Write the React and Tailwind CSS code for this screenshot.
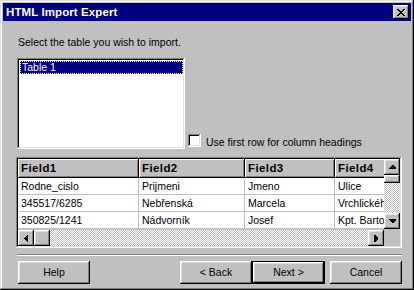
const raised =
  'shadow-[inset_-1px_-1px_#000,inset_1px_1px_#fff,inset_-2px_-2px_#808080,inset_2px_2px_#dfdfdf]';
const sunken =
  'shadow-[inset_-1px_-1px_#fff,inset_1px_1px_#808080,inset_-2px_-2px_#dfdfdf,inset_2px_2px_#000]';
const dither =
  'bg-[repeating-conic-gradient(#c0c0c0_0%_25%,#ffffff_0%_50%)] bg-[length:2px_2px]';

const columns = [
  { title: 'Field1', width: 'w-[121px]' },
  { title: 'Field2', width: 'w-[106px]' },
  { title: 'Field3', width: 'w-[90px]' },
  { title: 'Field4', width: 'w-[80px]' },
];

const rows = [
  ['Rodne_cislo', 'Prijmeni', 'Jmeno', 'Ulice'],
  ['345517/6285', 'Nebřenská', 'Marcela', 'Vrchlického'],
  ['350825/1241', 'Nádvorník', 'Josef', 'Kpt. Bartoše'],
];

const arrowPoints = {
  up: '3,0 4,0 7,3 7,4 0,4 0,3',
  down: '0,0 7,0 7,1 4,4 3,4 0,1',
  left: '4,0 4,7 3,7 0,4 0,3 3,0',
  right: '0,0 1,0 4,3 4,4 1,7 0,7',
};

const Arrow = ({ dir }) => {
  const vertical = dir === 'up' || dir === 'down';
  return (
    <svg
      width={vertical ? 7 : 4}
      height={vertical ? 4 : 7}
      shapeRendering="crispEdges"
      className="block"
    >
      <polygon points={arrowPoints[dir]} fill="#000" />
    </svg>
  );
};

const ScrollButton = ({ dir }) => (
  <div className={`w-[16px] h-[16px] shrink-0 bg-[#c0c0c0] flex items-center justify-center ${raised}`}>
    <Arrow dir={dir} />
  </div>
);

const Button = ({ children, isDefault }) =>
  isDefault ? (
    <div className="w-[73px] h-[23px] border border-black">
      <div className={`w-full h-full flex items-center justify-center bg-[#c0c0c0] ${raised}`}>
        {children}
      </div>
    </div>
  ) : (
    <div className={`w-[72px] h-[23px] flex items-center justify-center bg-[#c0c0c0] ${raised}`}>
      {children}
    </div>
  );

export default function App() {
  return (
    <div
      className={`w-[414px] h-[290px] bg-[#c0c0c0] p-[3px] flex flex-col text-black text-[10.5px] leading-[13px] font-['Liberation_Sans',Arial,sans-serif] shadow-[inset_-1px_-1px_#000,inset_1px_1px_#dfdfdf,inset_-2px_-2px_#808080,inset_2px_2px_#fff]`}
    >
      {/* Title bar */}
      <div className="h-[18px] bg-[#000080] flex items-center justify-between pl-[3px] pr-[2px]">
        <span className="text-white font-bold text-[11.5px] tracking-[0.1px]">HTML Import Expert</span>
        <div className={`w-[16px] h-[14px] bg-[#c0c0c0] flex items-center justify-center ${raised}`}>
          <svg width="8" height="7" shapeRendering="crispEdges" className="block">
            <path d="M0 0h2v1h-2zM6 0h2v1h-2zM1 1h2v1h-2zM5 1h2v1h-2zM2 2h4v1h-4zM3 3h2v1h-2zM2 4h4v1h-4zM1 5h2v1h-2zM5 5h2v1h-2zM0 6h2v1h-2zM6 6h2v1h-2z" fill="#000" />
          </svg>
        </div>
      </div>

      {/* Body */}
      <div className="flex flex-col pl-[13px]">
        <p className="mt-[15px] ml-[2px]">Select the table you wish to import.</p>

        <div className="mt-[9px] ml-[1px] flex items-end">
          <div className={`w-[168px] h-[91px] bg-white p-[2px] ${sunken}`}>
            <div className="ml-[1px] mt-[1px] h-[13px] bg-[#000080] border border-dotted border-[#ffffc0] text-white leading-[11px] pl-[1px]">
              Table 1
            </div>
          </div>
          <div className={`ml-[3px] mb-[2px] w-[13px] h-[13px] bg-white ${sunken}`} />
          <span className="ml-[5px]">Use first row for column headings</span>
        </div>

        {/* Data grid */}
        <div className={`mt-[8px] w-[386px] h-[91px] bg-[#c0c0c0] p-[2px] flex flex-col ${sunken}`}>
          <div className="flex h-[70px]">
            <div className="w-[366px] overflow-hidden bg-white">
              <div className="flex h-[19px]">
                {columns.map((c) => (
                  <div
                    key={c.title}
                    className={`${c.width} shrink-0 bg-[#c0c0c0] font-bold text-[11.5px] tracking-[0.4px] pl-[3px] flex items-center shadow-[inset_-1px_-1px_#000,inset_1px_1px_#fff,inset_-2px_-2px_#808080]`}
                  >
                    {c.title}
                  </div>
                ))}
              </div>
              {rows.map((r) => (
                <div key={r[0]} className="flex h-[17px]">
                  {r.map((cell, i) => (
                    <div
                      key={i}
                      className={`${columns[i].width} shrink-0 overflow-hidden whitespace-nowrap border-r border-b border-[#c0c0c0] pl-[3px] flex items-center`}
                    >
                      {cell}
                    </div>
                  ))}
                </div>
              ))}
            </div>
            <div className="w-[16px] flex flex-col">
              <ScrollButton dir="up" />
              <div className={`w-[16px] h-[8px] bg-[#c0c0c0] ${raised}`} />
              <div className={`flex-1 ${dither}`} />
              <ScrollButton dir="down" />
            </div>
          </div>
          <div className="flex h-[16px] mt-[1px]">
            <ScrollButton dir="left" />
            <div className={`w-[16px] h-[16px] bg-[#c0c0c0] ${raised}`} />
            <div className={`flex-1 ${dither}`} />
            <ScrollButton dir="right" />
            <div className="w-[16px] bg-[#c0c0c0]" />
          </div>
        </div>

        {/* Separator */}
        <div className="mt-[6px] ml-[1px] w-[385px] h-[2px] border-t border-[#808080] border-b border-b-white" />

        {/* Buttons */}
        <div className="mt-[5px] ml-[2px] flex">
          <Button>Help</Button>
          <div className="ml-[90px] flex">
            <Button>&lt; Back</Button>
            <Button isDefault>Next &gt;</Button>
            <div className="ml-[5px]">
              <Button>Cancel</Button>
            </div>
          </div>
        </div>
      </div>
    </div>
  );
}
